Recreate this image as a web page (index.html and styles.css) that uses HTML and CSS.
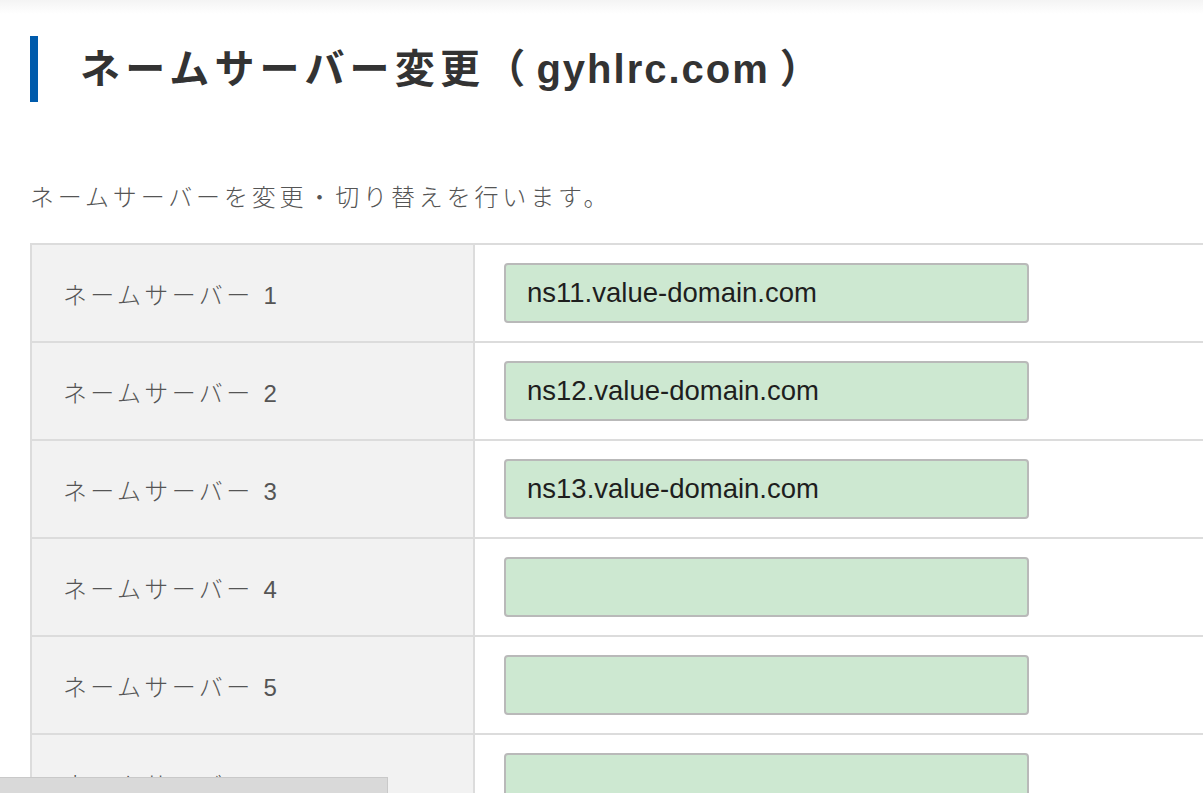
FILE: index.html
```html
<!DOCTYPE html>
<html lang="ja">
<head>
<meta charset="utf-8">
<title>ネームサーバー変更</title>
<link rel="stylesheet" href="styles.css">
</head>
<body>
<div class="top-shade"></div>
<main class="page">
  <h1 class="page-title">ネームサーバー変更（<span class="latin">gyhlrc.com</span>）</h1>
  <p class="lead">ネームサーバーを変更・切り替えを行います。</p>
  <div class="ns-table">
    <div class="ns-row"><div class="ns-label">ネームサーバー 1</div><div class="ns-field"><input class="ns-input" type="text" value="ns11.value-domain.com"></div></div>
    <div class="ns-row"><div class="ns-label">ネームサーバー 2</div><div class="ns-field"><input class="ns-input" type="text" value="ns12.value-domain.com"></div></div>
    <div class="ns-row"><div class="ns-label">ネームサーバー 3</div><div class="ns-field"><input class="ns-input" type="text" value="ns13.value-domain.com"></div></div>
    <div class="ns-row"><div class="ns-label">ネームサーバー 4</div><div class="ns-field"><input class="ns-input" type="text" value=""></div></div>
    <div class="ns-row"><div class="ns-label">ネームサーバー 5</div><div class="ns-field"><input class="ns-input" type="text" value=""></div></div>
    <div class="ns-row"><div class="ns-label">ネームサーバー 6</div><div class="ns-field"><input class="ns-input" type="text" value=""></div></div>
  </div>
</main>
<div class="bottom-panel"></div>
</body>
</html>
```
FILE: styles.css
```css
html, body {
  margin: 0;
  padding: 0;
  background: #fff;
  overflow: hidden;
}
body {
  font-family: "Liberation Sans", "Noto Sans CJK JP", sans-serif;
  color: #333;
  width: 1203px;
  height: 793px;
}
.top-shade {
  height: 14px;
  background: linear-gradient(#f4f4f4, #ffffff);
}
.page {
  padding-left: 30px;
}
.page-title {
  margin: 22px 0 0 0;
  height: 66px;
  line-height: 66px;
  border-left: 8px solid #005bac;
  padding-left: 42px;
  font-size: 40px;
  font-weight: bold;
  letter-spacing: 0.13em;
  color: #333;
  white-space: nowrap;
}
.page-title .latin {
  letter-spacing: 0.05em;
  margin-left: 6px;
  margin-right: 10px;
}
.lead {
  margin: 78px 0 27px 0;
  font-size: 24px;
  line-height: 36px;
  letter-spacing: 0.16em;
  color: #555;
  font-weight: 300;
  white-space: nowrap;
}
.ns-table {
  width: 1220px;
  border-top: 2px solid #dcdcdc;
  border-left: 2px solid #dcdcdc;
}
.ns-row {
  display: flex;
  border-bottom: 2px solid #dcdcdc;
}
.ns-label {
  flex: none;
  background: #f2f2f2;
  border-right: 2px solid #dcdcdc;
  padding-left: 31px;
  box-sizing: border-box;
  width: 443px;
  display: flex;
  align-items: center;
  font-size: 24px;
  letter-spacing: 0.14em;
  color: #555;
  font-weight: 300;
}
.ns-field {
  padding: 18px 29px;
}
.ns-input {
  display: block;
  box-sizing: border-box;
  width: 525px;
  height: 60px;
  margin: 0;
  padding: 0 0 0 21px;
  border: 2px solid #b9b9b9;
  border-radius: 4px;
  background: #cde8d1;
  font-family: "Liberation Sans", Arial, sans-serif;
  font-size: 27.5px;
  color: #1e1e1e;
  outline: none;
}
.bottom-panel {
  position: fixed;
  left: 0;
  bottom: 0;
  width: 387px;
  height: 15px;
  background: #d9d9d9;
  border-top: 1px solid #c9c9c9;
  border-right: 1px solid #c9c9c9;
}
```
